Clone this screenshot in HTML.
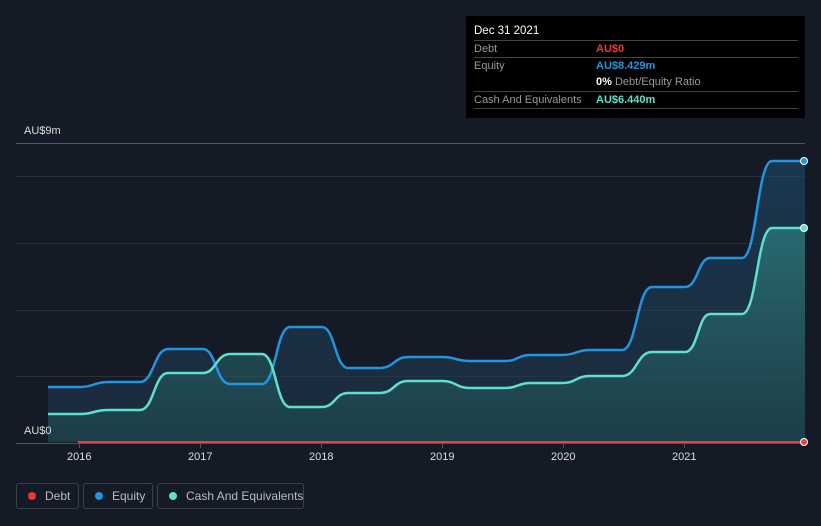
<!DOCTYPE html>
<html><head><style>
body{margin:0;width:821px;height:526px;background:#151b26;font-family:"Liberation Sans",sans-serif;overflow:hidden;position:relative}
.tip{position:absolute;left:466px;top:16px;width:339px;height:102px;background:#000;font-size:11px}
.tip .h{position:absolute;left:8px;top:9px;color:#fff;font-size:11.5px}
.row{position:absolute;left:8px;width:324px;height:16px;border-top:1px solid #444;color:#999;line-height:17px}
.row span{position:absolute;left:122px;font-weight:bold;white-space:nowrap}
.leg{position:absolute;top:483px;height:26px;border:1px solid #3a404a;border-radius:3px;color:#bbb;font-size:12px;line-height:24px;box-sizing:border-box;white-space:nowrap}
.leg i{position:absolute;left:11px;top:8px;width:8px;height:8px;border-radius:50%}
.leg span{position:absolute;left:28px;top:0}
.ax{position:absolute;color:#ddd;font-size:11px}
</style></head><body>
<svg width="821" height="526" style="position:absolute;left:0;top:0">
<defs><linearGradient id="g" x1="0" y1="0" x2="0" y2="1"><stop offset="0" stop-color="#1e4a6a" stop-opacity=".6"/><stop offset="1" stop-color="#1e3a50" stop-opacity=".5"/></linearGradient>
<linearGradient id="c" x1="0" y1="0" x2="0" y2="1"><stop offset="0" stop-color="#2f7f80" stop-opacity=".7"/><stop offset="1" stop-color="#1f4a50" stop-opacity=".6"/></linearGradient></defs>
<g stroke="#2a303a" stroke-width="1"><line x1="16" y1="143.5" x2="805" y2="143.5" stroke="#555"/><line x1="16" y1="176.5" x2="805" y2="176.5"/><line x1="16" y1="243.5" x2="805" y2="243.5"/><line x1="16" y1="310.5" x2="805" y2="310.5"/><line x1="16" y1="376.5" x2="805" y2="376.5"/></g>
<path d="M48,387 L80,387 C94,387 94,382 108,382 L140,382 C154,382 154,349 168,349 L203,349 C216,349 216,384 230,384 L262,384 C276,384 276,327 290,327 L322,327 C335,327 335,368 348,368 L380,368 C394,368 394,357 408,357 L442,357 C456,357 456,361 470,361 L505,361 C518,361 518,355 530,355 L562,355 C576,355 576,350 590,350 L622,350 C637,350 637,287 652,287 L685,287 C698,287 698,258 710,258 L742,258 C757,258 757,161 772,161 L805,161 L805,442 L48,442Z" fill="url(#g)"/>
<path d="M48,414 L80,414 C94,414 94,410 108,410 L140,410 C154,410 154,373 168,373 L203,373 C216,373 216,354 230,354 L262,354 C276,354 276,407 290,407 L322,407 C335,407 335,393 348,393 L380,393 C394,393 394,381 408,381 L442,381 C456,381 456,388 470,388 L505,388 C518,388 518,383 530,383 L562,383 C576,383 576,376 590,376 L622,376 C637,376 637,352 652,352 L685,352 C698,352 698,314 710,314 L742,314 C757,314 757,228 772,228 L805,228 L805,442 L48,442Z" fill="url(#c)"/>
<path d="M48,387 L80,387 C94,387 94,382 108,382 L140,382 C154,382 154,349 168,349 L203,349 C216,349 216,384 230,384 L262,384 C276,384 276,327 290,327 L322,327 C335,327 335,368 348,368 L380,368 C394,368 394,357 408,357 L442,357 C456,357 456,361 470,361 L505,361 C518,361 518,355 530,355 L562,355 C576,355 576,350 590,350 L622,350 C637,350 637,287 652,287 L685,287 C698,287 698,258 710,258 L742,258 C757,258 757,161 772,161 L805,161" fill="none" stroke="#2394df" stroke-width="2.5"/>
<path d="M48,414 L80,414 C94,414 94,410 108,410 L140,410 C154,410 154,373 168,373 L203,373 C216,373 216,354 230,354 L262,354 C276,354 276,407 290,407 L322,407 C335,407 335,393 348,393 L380,393 C394,393 394,381 408,381 L442,381 C456,381 456,388 470,388 L505,388 C518,388 518,383 530,383 L562,383 C576,383 576,376 590,376 L622,376 C637,376 637,352 652,352 L685,352 C698,352 698,314 710,314 L742,314 C757,314 757,228 772,228 L805,228" fill="none" stroke="#5fe0cc" stroke-width="2.5"/>
<line x1="16" y1="443.5" x2="805" y2="443.5" stroke="#555"/>
<line x1="78" y1="442" x2="805" y2="442" stroke="#e04545" stroke-width="2"/>
<g stroke="#555"><line x1="79.5" y1="443" x2="79.5" y2="448"/><line x1="200.5" y1="443" x2="200.5" y2="448"/><line x1="321.5" y1="443" x2="321.5" y2="448"/><line x1="442.5" y1="443" x2="442.5" y2="448"/><line x1="563.5" y1="443" x2="563.5" y2="448"/><line x1="684.5" y1="443" x2="684.5" y2="448"/></g>
<circle cx="804" cy="161" r="3.5" fill="#2394df" stroke="#fff" stroke-width="1"/>
<circle cx="804" cy="228" r="3.5" fill="#5fe0cc" stroke="#fff" stroke-width="1"/>
<circle cx="804" cy="442" r="3.5" fill="#e04545" stroke="#fff" stroke-width="1"/>
</svg>
<div class="ax" style="left:24px;top:125px">AU$9m</div>
<div class="ax" style="left:24px;top:425px">AU$0</div>
<div class="ax" style="left:67px;top:451px">2016</div>
<div class="ax" style="left:188px;top:451px">2017</div>
<div class="ax" style="left:309px;top:451px">2018</div>
<div class="ax" style="left:430px;top:451px">2019</div>
<div class="ax" style="left:551px;top:451px">2020</div>
<div class="ax" style="left:672px;top:451px">2021</div>
<div class="tip"><div class="h">Dec 31 2021</div>
<div class="row" style="top:24px">Debt<span style="color:#e83a3a">AU$0</span></div>
<div class="row" style="top:41px">Equity<span style="color:#2394df">AU$8.429m</span></div>
<div class="row" style="top:58px;border-top:none"><span style="color:#fff">0% <b style="color:#999;font-weight:normal">Debt/Equity Ratio</b></span></div>
<div class="row" style="top:75px;border-bottom:1px solid #444">Cash And Equivalents<span style="color:#5fe0cc">AU$6.440m</span></div>
</div>
<div class="leg" style="left:16px;width:63px"><i style="background:#e83a3a"></i><span>Debt</span></div>
<div class="leg" style="left:83px;width:70px"><i style="background:#2394df"></i><span>Equity</span></div>
<div class="leg" style="left:157px;width:147px"><i style="background:#5fe0cc"></i><span>Cash And Equivalents</span></div>
</body></html>
